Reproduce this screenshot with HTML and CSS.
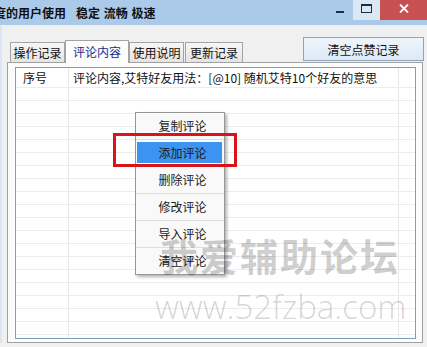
FILE: index.html
```html
<!DOCTYPE html>
<html lang="zh-CN">
<head>
    <meta charset="UTF-8">
    <title>评论内容</title>
    <link rel="stylesheet" href="styles.css">
</head>
<body>
<div class="window">

    <!-- заголовок окна -->
    <div class="titlebar">
        <div class="title">度的用户使用<span class="slogan">稳定 流畅 极速</span></div>
        <div class="controls">
            <span class="ctl min"></span>
            <span class="ctl max"></span>
            <span class="ctl close">
                <svg width="10" height="9" viewBox="0 0 10 9"><path d="M1 0.5 L9 8.5 M9 0.5 L1 8.5" stroke="#fff" stroke-width="1.8"/></svg>
            </span>
        </div>
    </div>

    <div class="client">
        <div class="toolbar">
            <div class="tabs">
                <div class="tab t1">操作记录</div>
                <div class="tab t2 active">评论内容</div>
                <div class="tab t3">使用说明</div>
                <div class="tab t4">更新记录</div>
            </div>
            <button class="clear-btn">清空点赞记录</button>
        </div>

        <div class="panel">
            <div class="listbox">
                <div class="head">
                    <span class="c1">序号</span>
                    <span class="c2">评论内容,艾特好友用法：[@10] 随机艾特10个好友的意思</span>
                </div>
                <div class="rows"></div>
            </div>
        </div>
    </div>

    <!-- контекстное меню -->
    <div class="menu">
        <div class="menu-item"><div class="menu-label">复制评论</div></div>
        <div class="menu-item"><div class="menu-label active">添加评论</div></div>
        <div class="menu-item"><div class="menu-label">删除评论</div></div>
        <div class="menu-item"><div class="menu-label">修改评论</div></div>
        <div class="menu-item"><div class="menu-label">导入评论</div></div>
        <div class="menu-item"><div class="menu-label">清空评论</div></div>
    </div>

    <div class="watermark">
        <div class="wm-name">我爱辅助论坛</div>
        <div class="wm-url">www.52fzba.com</div>
    </div>

    <div class="mark-box"></div>
</div>
</body>
</html>
```

FILE: styles.css
```css
body {
    margin: 0;
    font-family: "Noto Sans CJK SC", sans-serif;
    font-size: 12px;
    color: #111;
    background: #f0f0f0;
    width: 427px;
    height: 347px;
    overflow: hidden;
}

.window {
    position: relative;
    width: 427px;
    height: 347px;
}

/* заголовок */
.titlebar {
    height: 25px;
    background: #abcaea;
    display: flex;
    justify-content: space-between;
}

.title {
    margin-left: -6px;
    line-height: 25px;
    font-weight: bold;
    white-space: nowrap;
    color: #101010;
}

.title .slogan {
    margin-left: 10px;
    word-spacing: 1px;
}

.controls {
    display: flex;
    align-items: flex-start;
}

.ctl {
    width: 27px;
    height: 20px;
    display: flex;
    align-items: center;
    justify-content: center;
}

.ctl.min::before {
    content: "";
    width: 8px;
    height: 2px;
    margin-top: 3px;
    background: #1d2b45;
}

.ctl.max {
    background: #dce7f4;
}

.ctl.max::before {
    content: "";
    width: 9px;
    height: 6px;
    border: 1px solid #1d2b45;
    border-top-width: 2px;
    margin-bottom: 3px;
}

.ctl.close {
    width: 47px;
    background: #c75050;
}

.ctl.close svg {
    margin-bottom: 4px;
}

/* рабочая область */
.client {
    border-left: 2px solid #dbe6f2;
    padding: 12px 0 0 5px;
}

.toolbar {
    display: flex;
    justify-content: space-between;
    align-items: flex-end;
    height: 25px;
}

.tabs {
    display: flex;
    align-items: flex-end;
    margin-left: 3px;
    position: relative;
    z-index: 1;
}

.tab {
    height: 20px;
    box-sizing: border-box;
    border: 1px solid #a3a3a3;
    border-bottom: none;
    background: linear-gradient(#f6f6f6, #e4e4e4);
    line-height: 19px;
    text-align: center;
}

.tab.t1 { width: 55px; }
.tab.t2 { width: 64px; }
.tab.t3 { width: 55px; }
.tab.t4 { width: 58px; margin-left: 1px; }

.tab.active {
    height: 23px;
    line-height: 22px;
    margin-bottom: -1px;
    background: #fcfcfc;
    color: #1c2a8c;
}

.clear-btn {
    width: 121px;
    height: 24px;
    margin: 0 3px 1px 0;
    padding: 0;
    border: 1px solid #8ea4bd;
    background: linear-gradient(#eef5fc, #dde9f6);
    font-family: inherit;
    font-size: 12px;
    color: #111;
}

.panel {
    width: 416px;
    height: 281px;
    box-sizing: border-box;
    border: 1px solid #a0a0a0;
    background: #fcfcfc;
    padding: 4px 6px 3px 7px;
}

.listbox {
    height: 100%;
    box-sizing: border-box;
    border: 1px solid #7aa0c4;
    background-color: #fff;
    background-image:
        linear-gradient(to right, transparent 52px, #e6e6e6 52px, #e6e6e6 53px, transparent 53px),
        linear-gradient(to right, transparent 382px, #e6e6e6 382px, #e6e6e6 383px, transparent 383px);
    display: flex;
    flex-direction: column;
}

.head {
    height: 20px;
    box-sizing: border-box;
    border-bottom: 1px solid #ececec;
    display: flex;
    line-height: 19px;
    white-space: nowrap;
}

.head .c1 {
    width: 53px;
    box-sizing: border-box;
    padding-left: 7px;
}

.head .c2 {
    padding-left: 4px;
}

.rows {
    flex: 1;
    background-image: repeating-linear-gradient(to bottom, transparent 0, transparent 12px, #ececec 12px, #ececec 13px);
}

/* меню */
.menu {
    position: absolute;
    left: 135px;
    top: 112px;
    width: 90px;
    box-sizing: border-box;
    border: 1px solid #979797;
    background: #f9f9f9;
    box-shadow: 2px 2px 3px rgba(0, 0, 0, 0.3);
}

.menu-item {
    height: 21px;
    padding: 2px 2px 3px 1px;
    border-top: 1px solid #dedede;
}

.menu-item:first-child {
    border-top: none;
}

.menu-label {
    height: 21px;
    line-height: 21px;
    text-align: center;
    padding-left: 6px;
    color: #1a1a1a;
}

.menu-label.active {
    background: #3d93f0;
}

/* водяной знак */
.watermark {
    position: absolute;
    left: 155px;
    top: 236px;
    pointer-events: none;
}

.wm-name {
    margin-left: 5px;
    font-size: 38px;
    line-height: 38px;
    font-weight: bold;
    letter-spacing: 2px;
    color: rgba(0, 0, 0, 0.2);
    white-space: nowrap;
}

.wm-url {
    margin-top: 17px;
    font-family: "Open Sans", sans-serif;
    font-weight: 300;
    font-size: 33px;
    line-height: 32px;
    color: rgba(0, 0, 0, 0.18);
    white-space: nowrap;
}

.mark-box {
    position: absolute;
    left: 113px;
    top: 133px;
    width: 124px;
    height: 34px;
    box-sizing: border-box;
    border: 3px solid #d7141a;
}
```
